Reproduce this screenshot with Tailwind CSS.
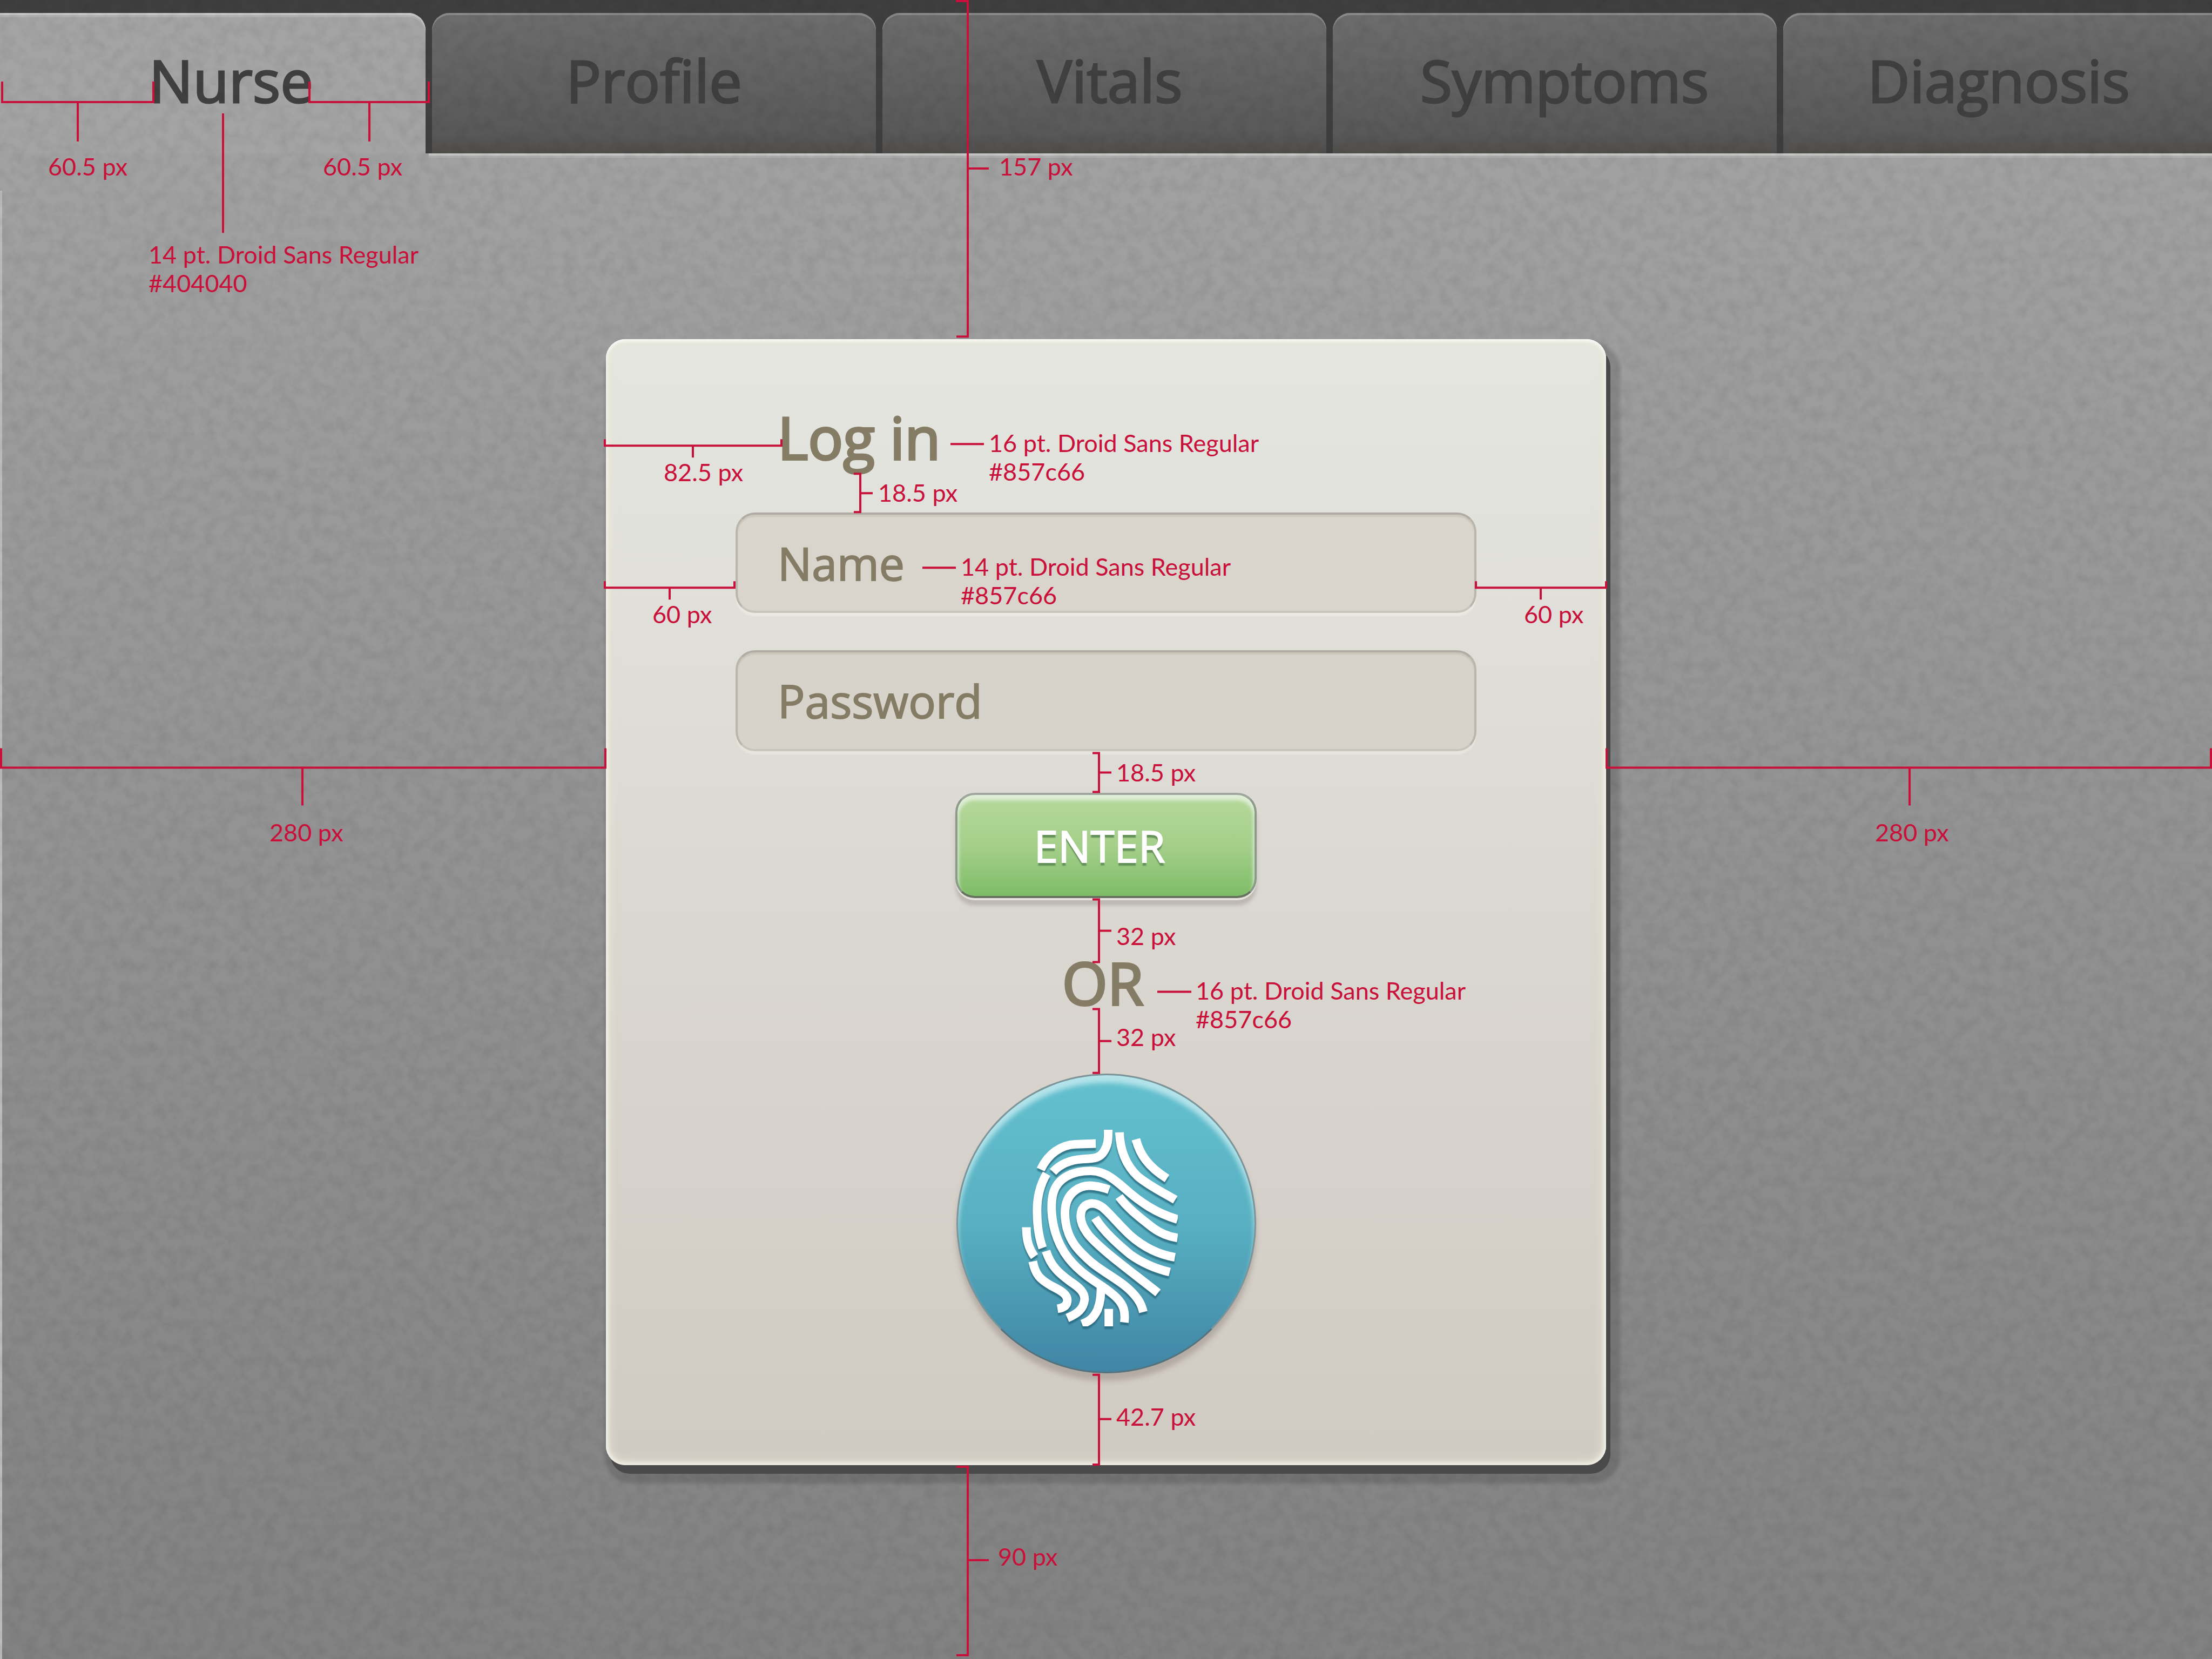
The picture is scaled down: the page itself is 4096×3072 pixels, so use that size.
<!DOCTYPE html>
<html lang="en">
<head>
<meta charset="utf-8">
<title>Log in</title>
<script src="https://cdn.jsdelivr.net/npm/@tailwindcss/browser@4"></script>
</head>
<body class="relative min-h-screen overflow-x-hidden bg-linear-to-b from-[#a5a5a5] to-[#828282] font-['Open_Sans',sans-serif] text-[108px] leading-[120px] font-medium text-[#404040]">

<nav class="grid grid-cols-[788fr_822fr_822fr_822fr_794fr] gap-x-3 bg-[#3f3f3f] pt-6 h-[284px] [-webkit-text-stroke:3px_#404040]">
  <a href="#nurse" aria-current="page" class="flex justify-center rounded-tr-[32px] bg-[#a4a4a4] pt-[65px] pl-[68px] shadow-[inset_0_4px_0_#c6c6c6,inset_0_8px_0_#b0b0b0]">Nurse</a>
  <a href="#profile" class="flex justify-center rounded-t-[32px] bg-linear-to-b from-[#6e6d6e] via-[#5a595a] via-85% to-[#4f4e4b] pt-[65px] shadow-[inset_0_4px_0_#8a8a8a]">Profile</a>
  <a href="#vitals" class="flex justify-center rounded-t-[32px] bg-linear-to-b from-[#6e6d6e] via-[#5a595a] via-85% to-[#4f4e4b] pt-[65px] pl-5 shadow-[inset_0_4px_0_#8a8a8a]">Vitals</a>
  <a href="#symptoms" class="flex justify-center rounded-t-[32px] bg-linear-to-b from-[#6e6d6e] via-[#5a595a] via-85% to-[#4f4e4b] pt-[65px] pl-9 shadow-[inset_0_4px_0_#8a8a8a]">Symptoms</a>
  <a href="#diagnosis" class="flex justify-center rounded-tl-[32px] bg-linear-to-b from-[#6e6d6e] via-[#5a595a] via-85% to-[#4f4e4b] pt-[65px] pl-1 shadow-[inset_0_4px_0_#8a8a8a]">Diagnosis</a>
</nav>

<!-- panel edge highlights -->
<div class="grid grid-cols-[794fr_3302fr]" aria-hidden="true">
  <span></span>
  <span class="h-2 border-t-4 border-[#c6c6c6] bg-[#aeaeae]"></span>
</div>
<div class="absolute top-[353px] bottom-0 left-0 w-1 bg-[#bcbcbc]" aria-hidden="true"></div>

<!-- concrete grain -->
<svg class="absolute inset-0 size-full" aria-hidden="true">
  <filter id="grain" x="0" y="0" width="100%" height="100%" color-interpolation-filters="sRGB">
    <feTurbulence type="fractalNoise" baseFrequency="0.045" numOctaves="3" seed="7"/>
    <feColorMatrix values="0 0 0 0 0  0 0 0 0 0  0 0 0 0 0  0.13 0 0 0 -0.045"/>
  </filter>
  <rect width="100%" height="100%" filter="url(#grain)"/>
</svg>

<main class="relative pt-[336px] pb-[360px]">
  <form class="mx-auto flex w-[1852px] flex-col rounded-[36px] bg-linear-to-b from-[#e5e6e0] to-[#d1cac3] px-[240px] pt-[122px] pb-[170px] text-[#857c66] shadow-[inset_0_4px_4px_#f8f8f4,inset_0_0_6px_4px_#efefe6,inset_0_0_16px_8px_rgba(232,232,214,0.7),8px_16px_0_#4a4a4a,12px_20px_6px_14px_rgba(0,0,0,0.14)]">
    <h1 class="pl-[78px] [-webkit-text-stroke:4px_#857c66]">Log in</h1>
    <input id="name" type="text" aria-label="Name" placeholder="Name" class="mt-[79px] h-[186px] rounded-[36px] border-4 border-[#bab6ad] border-t-[#b0aca4] border-b-[#c8c5bc] bg-[#dad5cc] px-[74px] text-[84px] font-normal shadow-[inset_0_4px_2px_#cdc8bc,0_6px_2px_#ebe9e2] placeholder:text-[#857c66] placeholder:opacity-100 [-webkit-text-stroke:2px_#857c66]">
    <input id="password" type="password" aria-label="Password" placeholder="Password" class="mt-[69px] h-[187px] rounded-[36px] border-4 border-[#bab6ad] border-t-[#b0aca4] border-b-[#c8c5bc] bg-[#d7d2ca] px-[74px] text-[84px] font-normal shadow-[inset_0_4px_2px_#cac5b9,0_6px_2px_#e8e5de] placeholder:text-[#857c66] placeholder:opacity-100 [-webkit-text-stroke:2px_#857c66]">
    <button type="submit" class="mt-[77px] h-[195px] w-[558px] self-center rounded-[36px] border-4 border-[#8c9a8c] border-t-[#9fa69c] border-b-[#66745f] bg-linear-to-b from-[#b5d89a] via-[#a5cf8b] via-50% to-[#7dbd67] pr-6 text-[80px] text-white text-shadow-[0_6px_2px_#64905a] shadow-[inset_0_8px_6px_2px_#dfeed6,0_4px_0_#e6e2de,0_14px_6px_#bdb8b2] [-webkit-text-stroke:2px_#fff]">ENTER</button>
    <p class="mt-[97px] pr-3 text-center [-webkit-text-stroke:4px_#857c66]">OR</p>
    <button type="button" aria-label="Log in with fingerprint" class="mt-[108px] flex size-[555px] items-center justify-center self-center rounded-full border-3 border-[#7f9498] border-b-[#55727c] bg-linear-to-b from-[#63c0ce] via-[#58b0c2] via-50% to-[#4085a4] pt-4 pr-6 shadow-[inset_0_14px_10px_#b4e3ea,0_14px_10px_rgba(120,110,100,0.35)]">
      <svg class="h-[364px] w-[289px] drop-shadow-[0_5px_1px_rgba(35,95,115,0.7)]" viewBox="92 88 902 1138" fill="none" stroke="#fff" stroke-width="50" aria-hidden="true">
        <path d="M201 318C245 225 320 176 400 172L520 168"/>
        <path d="M272 332C320 280 380 262 440 258C520 254 545 250 568 212C590 175 592 150 592 88"/>
        <path d="M657 103C660 200 690 290 765 360C840 420 900 445 980 493"/>
        <path d="M752 143C775 230 820 300 932 370"/>
        <path d="M235 343C190 420 178 500 180 570C181 650 190 710 212 772"/>
        <path d="M118 652C118 720 128 770 165 822"/>
        <path d="M993 607C870 570 780 510 690 430C610 360 560 326 490 326C380 326 300 370 275 450C255 520 265 610 285 680C320 800 390 875 470 935C530 980 590 1010 640 1060C680 1100 693 1140 685 1203"/>
        <path d="M597 435C510 405 450 400 400 440C345 480 335 550 345 620C360 730 420 790 500 860C590 930 680 970 740 1040C775 1080 785 1105 795 1143"/>
        <path d="M978 826C880 810 800 770 720 700C650 635 600 570 560 538C510 500 460 512 440 550C420 600 440 650 480 700C560 790 700 890 880 1032"/>
        <path d="M516 598C560 670 640 745 720 810C790 860 870 893 948 912"/>
        <path d="M655 475C700 540 780 600 850 655C900 692 950 708 993 714"/>
        <path d="M232 790C260 880 310 920 370 965C430 1005 455 1030 455 1070C450 1125 415 1152 355 1178"/>
        <path d="M155 850C170 930 200 955 260 990C320 1020 355 1040 355 1075C355 1100 340 1118 298 1124"/>
        <path d="M550 975C550 1060 545 1090 530 1130C510 1170 490 1195 440 1213"/>
        <path d="M595 1125V1226"/>
      </svg>
    </button>
  </form>
</main>

<!-- measurement annotations laid over the design -->
<aside class="pointer-events-none absolute inset-0 font-['Lato',sans-serif] text-[45px] leading-[53px] font-normal whitespace-nowrap text-[#c8103a]">
  <svg class="absolute inset-0 size-full" viewBox="0 0 4096 3072" preserveAspectRatio="none" fill="none" stroke="#c8103a" stroke-width="4" aria-hidden="true">
    <path d="M4 151V189H284V151M144 189V262M573 151V189H794V151M684 189V262M413 210V431"/>
    <path d="M1770 2H1792V623H1771M1792 312H1831"/>
    <path d="M1120 813V825H1447V813M1283 825V847M1760 822H1822"/>
    <path d="M1581 877H1593V948H1581M1593 913H1616"/>
    <path d="M1120 1076V1088H1360V1076M1240 1088V1110M1708 1051H1770"/>
    <path d="M2733 1076V1088H2974V1076M2853 1088V1110"/>
    <path d="M2 1385V1421H1121V1385M560 1421V1491M2975 1385V1421H4094V1385M3536 1421V1491"/>
    <path d="M2023 1394H2035V1466H2023M2035 1430H2058"/>
    <path d="M2023 1665H2035V1781H2023M2035 1723H2058M2143 1836H2206"/>
    <path d="M2023 1868H2035V1986H2023M2035 1927H2058"/>
    <path d="M2023 2545H2035V2711H2023M2035 2627H2058"/>
    <path d="M1771 2715H1792V3064H1771M1792 2888H1831"/>
  </svg>
  <span class="absolute top-[282px] left-[89px]">60.5 px</span>
  <span class="absolute top-[282px] left-[598px]">60.5 px</span>
  <span class="absolute top-[445px] left-[275px]">14 pt. Droid Sans Regular<br>#404040</span>
  <span class="absolute top-[282px] left-[1850px]">157 px</span>
  <span class="absolute top-[794px] left-[1831px]">16 pt. Droid Sans Regular<br>#857c66</span>
  <span class="absolute top-[848px] left-[1229px]">82.5 px</span>
  <span class="absolute top-[886px] left-[1626px]">18.5 px</span>
  <span class="absolute top-[1023px] left-[1779px]">14 pt. Droid Sans Regular<br>#857c66</span>
  <span class="absolute top-[1111px] left-[1208px]">60 px</span>
  <span class="absolute top-[1111px] left-[2822px]">60 px</span>
  <span class="absolute top-[1515px] left-[499px]">280 px</span>
  <span class="absolute top-[1515px] left-[3472px]">280 px</span>
  <span class="absolute top-[1404px] left-[2067px]">18.5 px</span>
  <span class="absolute top-[1707px] left-[2067px]">32 px</span>
  <span class="absolute top-[1808px] left-[2214px]">16 pt. Droid Sans Regular<br>#857c66</span>
  <span class="absolute top-[1894px] left-[2067px]">32 px</span>
  <span class="absolute top-[2597px] left-[2067px]">42.7 px</span>
  <span class="absolute top-[2856px] left-[1848px]">90 px</span>
</aside>
</body>
</html>
